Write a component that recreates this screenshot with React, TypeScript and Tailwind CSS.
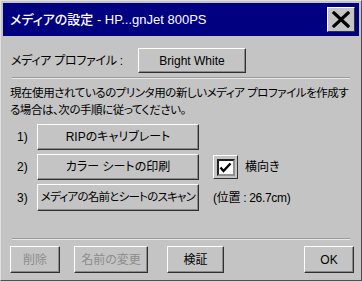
import React from 'react'

const font = "font-['Liberation_Sans','Noto_Sans_CJK_JP',sans-serif] [font-feature-settings:'palt']"

function Btn({ children, className = '', disabled = false }: { children: React.ReactNode; className?: string; disabled?: boolean }) {
  return (
    <div
      className={
        'flex items-center justify-center whitespace-nowrap border border-t-white border-l-white border-b-[#303030] border-r-[#303030] bg-[#c4c4c4] shadow-[inset_-1px_-1px_0_#8a8a8a] ' +
        (disabled ? 'text-[#8c8c8c] ' : 'text-black ') +
        className
      }
    >
      {children}
    </div>
  )
}

function Separator({ className = '' }: { className?: string }) {
  return <div className={'mx-[9px] h-[2px] border-t border-t-[#9a9a9a] border-b border-b-[#e8e8e8] ' + className} />
}

export default function App() {
  return (
    <div className={'w-[362px] h-[281px] bg-[#c4c4c4] border border-t-[#e0e0e0] border-l-[#e0e0e0] border-b-[#505050] border-r-[#505050] p-[2px] flex flex-col ' + font}>
      {/* title bar */}
      <div className="h-[33px] bg-[#000080] flex items-center pl-[7px] pr-[4px]">
        <span className="text-white text-[13px] font-medium flex-1">メディアの設定 - HP...gnJet 800PS</span>
        <div className="w-[28px] h-[25px] bg-[#c4c4c4] border border-t-white border-l-white border-b-[#303030] border-r-[#303030] flex items-center justify-center">
          <svg width="18" height="17" viewBox="0 0 18 17">
            <path d="M2 2 L16 15 M16 2 L2 15" stroke="#000" strokeWidth="3.2" strokeLinecap="square" />
          </svg>
        </div>
      </div>

      {/* profile row */}
      <div className="mt-[12px] flex items-center h-[25px] pl-[8px]">
        <span className="text-[12px] w-[127px] tracking-[-0.3px]">メディア プロファイル :</span>
        <Btn className="w-[108px] h-[25px] text-[12px]">Bright White</Btn>
      </div>

      <Separator className="mt-[4px]" />

      <p className="mt-[6px] pl-[7px] text-[11.5px] leading-[17px] tracking-[-0.45px] whitespace-nowrap">
        現在使用されているのプリンタ用の新しいメディア プロファイルを作成す
        <br />
        る場合は、次の手順に従ってください。
      </p>

      {/* steps */}
      <div className="mt-[5px] flex flex-col gap-[4px] pl-[14px]">
        <div className="flex items-center h-[26px]">
          <span className="w-[20px] text-[12px]">1)</span>
          <Btn className="w-[162px] h-[26px] text-[12px]">RIPのキャリブレート</Btn>
        </div>
        <div className="flex items-center h-[26px]">
          <span className="w-[20px] text-[12px]">2)</span>
          <Btn className="w-[162px] h-[26px] text-[12px]">カラー シートの印刷</Btn>
          <div className="ml-[14px] w-[25px] h-[24px] border border-t-white border-l-white border-b-[#303030] border-r-[#303030] flex items-center justify-center">
            <div className="w-[18px] h-[17px] bg-white border-2 border-t-[#202020] border-l-[#202020] border-b-[#909090] border-r-[#909090] flex items-center justify-center">
              <svg width="13" height="11" viewBox="0 0 13 11">
                <path d="M1.5 5.5 L4.5 9 L11.5 1.5" stroke="#000" strokeWidth="2.4" fill="none" />
              </svg>
            </div>
          </div>
          <span className="ml-[7px] text-[12px]">横向き</span>
        </div>
        <div className="flex items-center h-[27px]">
          <span className="w-[20px] text-[12px]">3)</span>
          <Btn className="w-[162px] h-[27px] text-[11.5px] tracking-[-0.75px]">メディアの名前とシートのスキャン</Btn>
          <span className="ml-[14px] text-[12px] tracking-[-0.3px]">(位置 : 26.7cm)</span>
        </div>
      </div>

      <Separator className="mt-[27px]" />

      {/* bottom buttons */}
      <div className="mt-[6px] flex items-center pl-[7px] h-[27px]">
        <Btn disabled className="w-[50px] h-[27px] text-[12px]">削除</Btn>
        <Btn disabled className="ml-[14px] w-[74px] h-[27px] text-[12px]">名前の変更</Btn>
        <Btn className="ml-[19px] w-[57px] h-[27px] text-[12px]">検証</Btn>
        <Btn className="ml-[80px] w-[50px] h-[27px] text-[12px]">OK</Btn>
      </div>
    </div>
  )
}
